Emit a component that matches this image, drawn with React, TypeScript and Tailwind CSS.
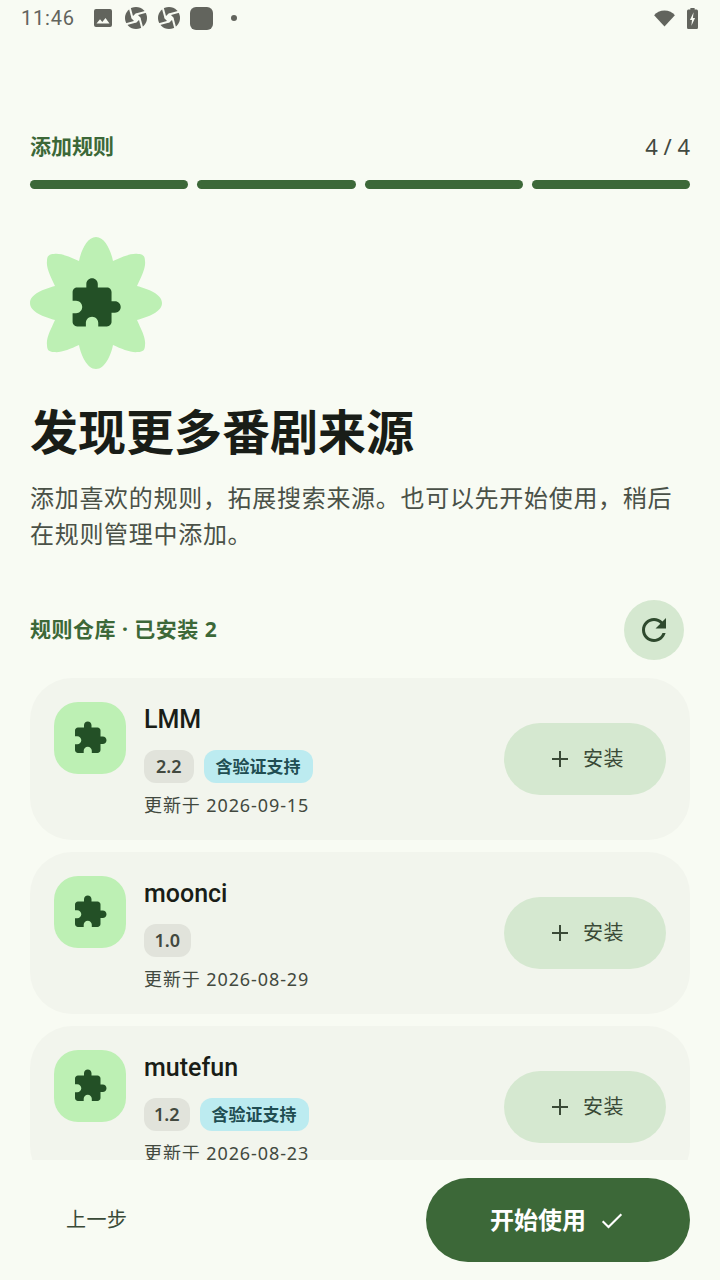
const Puzzle = ({ className }: { className: string }) => (
  <svg viewBox="0 0 24 24" className={className} fill="currentColor">
    <path d="M20.5 11H19V7c0-1.1-.9-2-2-2h-4V3.5C13 2.12 11.88 1 10.5 1S8 2.12 8 3.5V5H4c-1.1 0-1.99.9-1.99 2v3.8H3.5c1.49 0 2.7 1.21 2.7 2.7s-1.21 2.7-2.7 2.7H2V20c0 1.1.9 2 2 2h3.8v-1.5c0-1.49 1.21-2.7 2.7-2.7 1.49 0 2.7 1.21 2.7 2.7V22H17c1.1 0 2-.9 2-2v-4h1.5c1.38 0 2.5-1.12 2.5-2.5S21.88 11 20.5 11z" />
  </svg>
);

const Aperture = () => (
  <svg viewBox="0 0 22 22" className="w-[22px] h-[22px]">
    <circle cx="11" cy="11" r="11" fill="#62645d" />
    <g stroke="#f8fbf3" strokeWidth="2" fill="#f8fbf3" strokeLinejoin="round">
      <path d="M11 7.500 L14.500 11 L11 14.500 L7.500 11 Z" />
      <path d="M11 7.500 L22 4.500" />
      <path d="M14.500 11 L17.500 22" />
      <path d="M11 14.500 L0 17.500" />
      <path d="M7.500 11 L4.500 0" />
    </g>
  </svg>
);

const StatusBar = () => (
  <div className="h-9 flex items-center px-[21px] shrink-0">
    <span className="text-[20px] tracking-[0.8px] text-[#62645d] font-['Roboto',sans-serif]">11:46</span>
    <svg viewBox="0 0 18 18" className="w-[18px] h-[18px] ml-[19px]" fill="#62645d">
      <path d="M2 0h14a2 2 0 0 1 2 2v14a2 2 0 0 1-2 2H2a2 2 0 0 1-2-2V2a2 2 0 0 1 2-2zm.5 14.500h13l-4-5.500-3.200 4-2.300-2.800z" fillRule="evenodd" />
    </svg>
    <span className="ml-[13px]"><Aperture /></span>
    <span className="ml-[11px]"><Aperture /></span>
    <span className="ml-[10px] w-[23px] h-[23px] rounded-[6px] bg-[#62645d]" />
    <span className="ml-[18px] w-[6px] h-[6px] rounded-full bg-[#62645d]" />
    <span className="flex-1" />
    <svg viewBox="0 0 24 18" className="w-[23px] h-[17px]" fill="#62645d">
      <path d="M12 17.500 1 5.500C3.500 2.500 7.500.500 12 .500s8.500 2 11 5z" />
    </svg>
    <svg viewBox="0 0 13 20" className="w-[11px] h-[21px] ml-[11px] mr-[1px]" preserveAspectRatio="none" fill="#62645d">
      <path fillRule="evenodd" d="M4 0h5v1.500h2.500a1.500 1.500 0 0 1 1.500 1.500v15.500a1.500 1.500 0 0 1-1.500 1.500h-10A1.500 1.500 0 0 1 0 18.500V3a1.500 1.500 0 0 1 1.500-1.500H4zM7.800 4 3.500 11.500h2.400L5.200 17l4.300-7.500H7z" />
    </svg>
  </div>
);

const Flower = () => (
  <div className="relative w-[132px] h-[132px]">
    <svg viewBox="-66 -66 132 132" className="w-[132px] h-[132px]" fill="#bdf0b4">
      <path d="M0-66C9-66 15-52 17-42C26-46 35-50 42-49C47-49 49-47 49-42C50-35 45-26 41-17C52-14 66-9 66 0C66 9 52 14 41 17C45 26 50 35 49 42C49 47 47 49 42 49C35 50 26 46 17 42C15 52 9 66 0 66C-9 66-15 52-17 42C-26 46-35 50-42 49C-47 49-49 47-49 42C-50 35-45 26-41 17C-52 14-66 9-66 0C-66-9-52-14-41-17C-45-26-50-35-49-42C-49-47-47-49-42-49C-35-50-26-46-17-42C-15-52-9-66 0-66Z" />
    </svg>
    <Puzzle className="absolute left-[38px] top-[39px] w-[55px] h-[55px] text-[#235026]" />
  </div>
);

type Rule = { name: string; ver: string; verify: boolean; date: string; chip: string };
const rules: Rule[] = [
  { name: "LMM", ver: "2.2", verify: true, date: "2026-09-15", chip: "px-3" },
  { name: "moonci", ver: "1.0", verify: false, date: "2026-08-29", chip: "px-[10.5px]" },
  { name: "mutefun", ver: "1.2", verify: true, date: "2026-08-23", chip: "px-[10px]" },
];

const Card = ({ r }: { r: Rule }) => (
  <div className="h-[162px] shrink-0 rounded-[42px] bg-[#f2f5ed] flex items-center px-6">
    <div className="self-start mt-6 w-[72px] h-[72px] rounded-[24px] bg-[#bdf0b4] flex items-center justify-center">
      <Puzzle className="w-9 h-9 text-[#235026]" />
    </div>
    <div className="ml-[18px] flex-1 self-start mt-[24px] flex flex-col">
      <div className="h-9 text-[25px] leading-9 font-medium text-[#191d17] font-['Roboto',sans-serif]">{r.name}</div>
      <div className="mt-[12px] flex gap-[10px] h-[33px]">
        <span className={`${r.chip} rounded-[12px] bg-[#e1e3db] text-[18px] leading-[33px] font-semibold text-[#42493f]`}>{r.ver}</span>
        {r.verify && (
          <span className="px-3 rounded-[12px] bg-[#bcebf0] text-[17px] leading-[33px] font-semibold text-[#1f4d52]">含验证支持</span>
        )}
      </div>
      <div className="mt-[6px] text-[18px] leading-[33px] text-[#42493f] tracking-[0.9px]">更新于 {r.date}</div>
    </div>
    <div className="w-[162px] h-[72px] rounded-full bg-[#d5e8d0] flex items-center justify-center pl-[6px] text-[#3a4a37]">
      <svg viewBox="0 0 16 16" className="w-4 h-4 mr-[15px]" fill="none" stroke="currentColor" strokeWidth="2">
        <path d="M8 0v16M0 8h16" />
      </svg>
      <span className="text-[20px] leading-6 tracking-[0.5px]">安装</span>
    </div>
  </div>
);

export default function App() {
  return (
    <div className="w-[720px] h-[1280px] bg-[#f8fbf3] flex flex-col overflow-hidden font-['Noto_Sans','Noto_Sans_CJK_SC',sans-serif]">
      <StatusBar />
      <div className="h-[1124px] px-[30px] flex flex-col overflow-hidden">
        <div className="mt-[94px] flex items-center justify-between h-9">
          <span className="text-[21px] font-bold text-[#3c6838]">添加规则</span>
          <span className="text-[22px] text-[#42493f]">4 / 4</span>
        </div>
        <div className="mt-[17px] grid grid-cols-4 gap-[9px]">
          <div className="h-[9px] rounded-full bg-[#3c6838]" />
          <div className="h-[9px] rounded-full bg-[#3c6838]" />
          <div className="h-[9px] rounded-full bg-[#3c6838]" />
          <div className="h-[9px] rounded-full bg-[#3c6838]" />
        </div>
        <div className="mt-[48px]"><Flower /></div>
        <h1 className="mt-[35px] text-[48px] leading-[56px] font-bold text-[#191d17]">发现更多番剧来源</h1>
        <p className="mt-[20px] text-[24px] leading-[36px] text-[#4a5147] tracking-[0.7px]">添加喜欢的规则，拓展搜索来源。也可以先开始使用，稍后在规则管理中添加。</p>
        <div className="mt-[48px] h-[60px] flex items-center justify-between">
          <span className="text-[21px] font-bold text-[#3c6838] tracking-[0.5px]">规则仓库 · 已安装 2</span>
          <span className="mr-[6px] w-[60px] h-[60px] rounded-full bg-[#d5e8d0] flex items-center justify-center text-[#2f4a2e]">
            <svg viewBox="0 0 24 24" className="w-[36px] h-[36px]" fill="currentColor">
              <path d="M17.65 6.35C16.200 4.900 14.210 4 12 4c-4.420 0-7.990 3.580-7.990 8s3.570 8 7.990 8c3.730 0 6.840-2.550 7.730-6h-2.080c-.820 2.330-3.040 4-5.650 4-3.310 0-6-2.690-6-6s2.690-6 6-6c1.660 0 3.140.690 4.220 1.780L13 11h7V4l-2.350 2.350z" />
            </svg>
          </span>
        </div>
        <div className="mt-[18px] flex flex-col gap-3">
          {rules.map((r) => <Card key={r.name} r={r} />)}
        </div>
      </div>
      <div className="px-[30px] flex-1 flex items-start justify-between pt-[18px]">
        <span className="ml-[36px] h-[84px] flex items-center text-[20px] text-[#3a4a37] tracking-[0.5px]">上一步</span>
        <div className="w-[264px] h-[84px] rounded-full bg-[#3c6838] flex items-center justify-center text-white">
          <span className="text-[24px] font-bold">开始使用</span>
          <svg viewBox="0 0 24 24" className="ml-[12px] w-7 h-7" fill="none" stroke="currentColor" strokeWidth="1.800">
            <path d="M4 13l5 5L20 7" />
          </svg>
        </div>
      </div>
    </div>
  );
}
